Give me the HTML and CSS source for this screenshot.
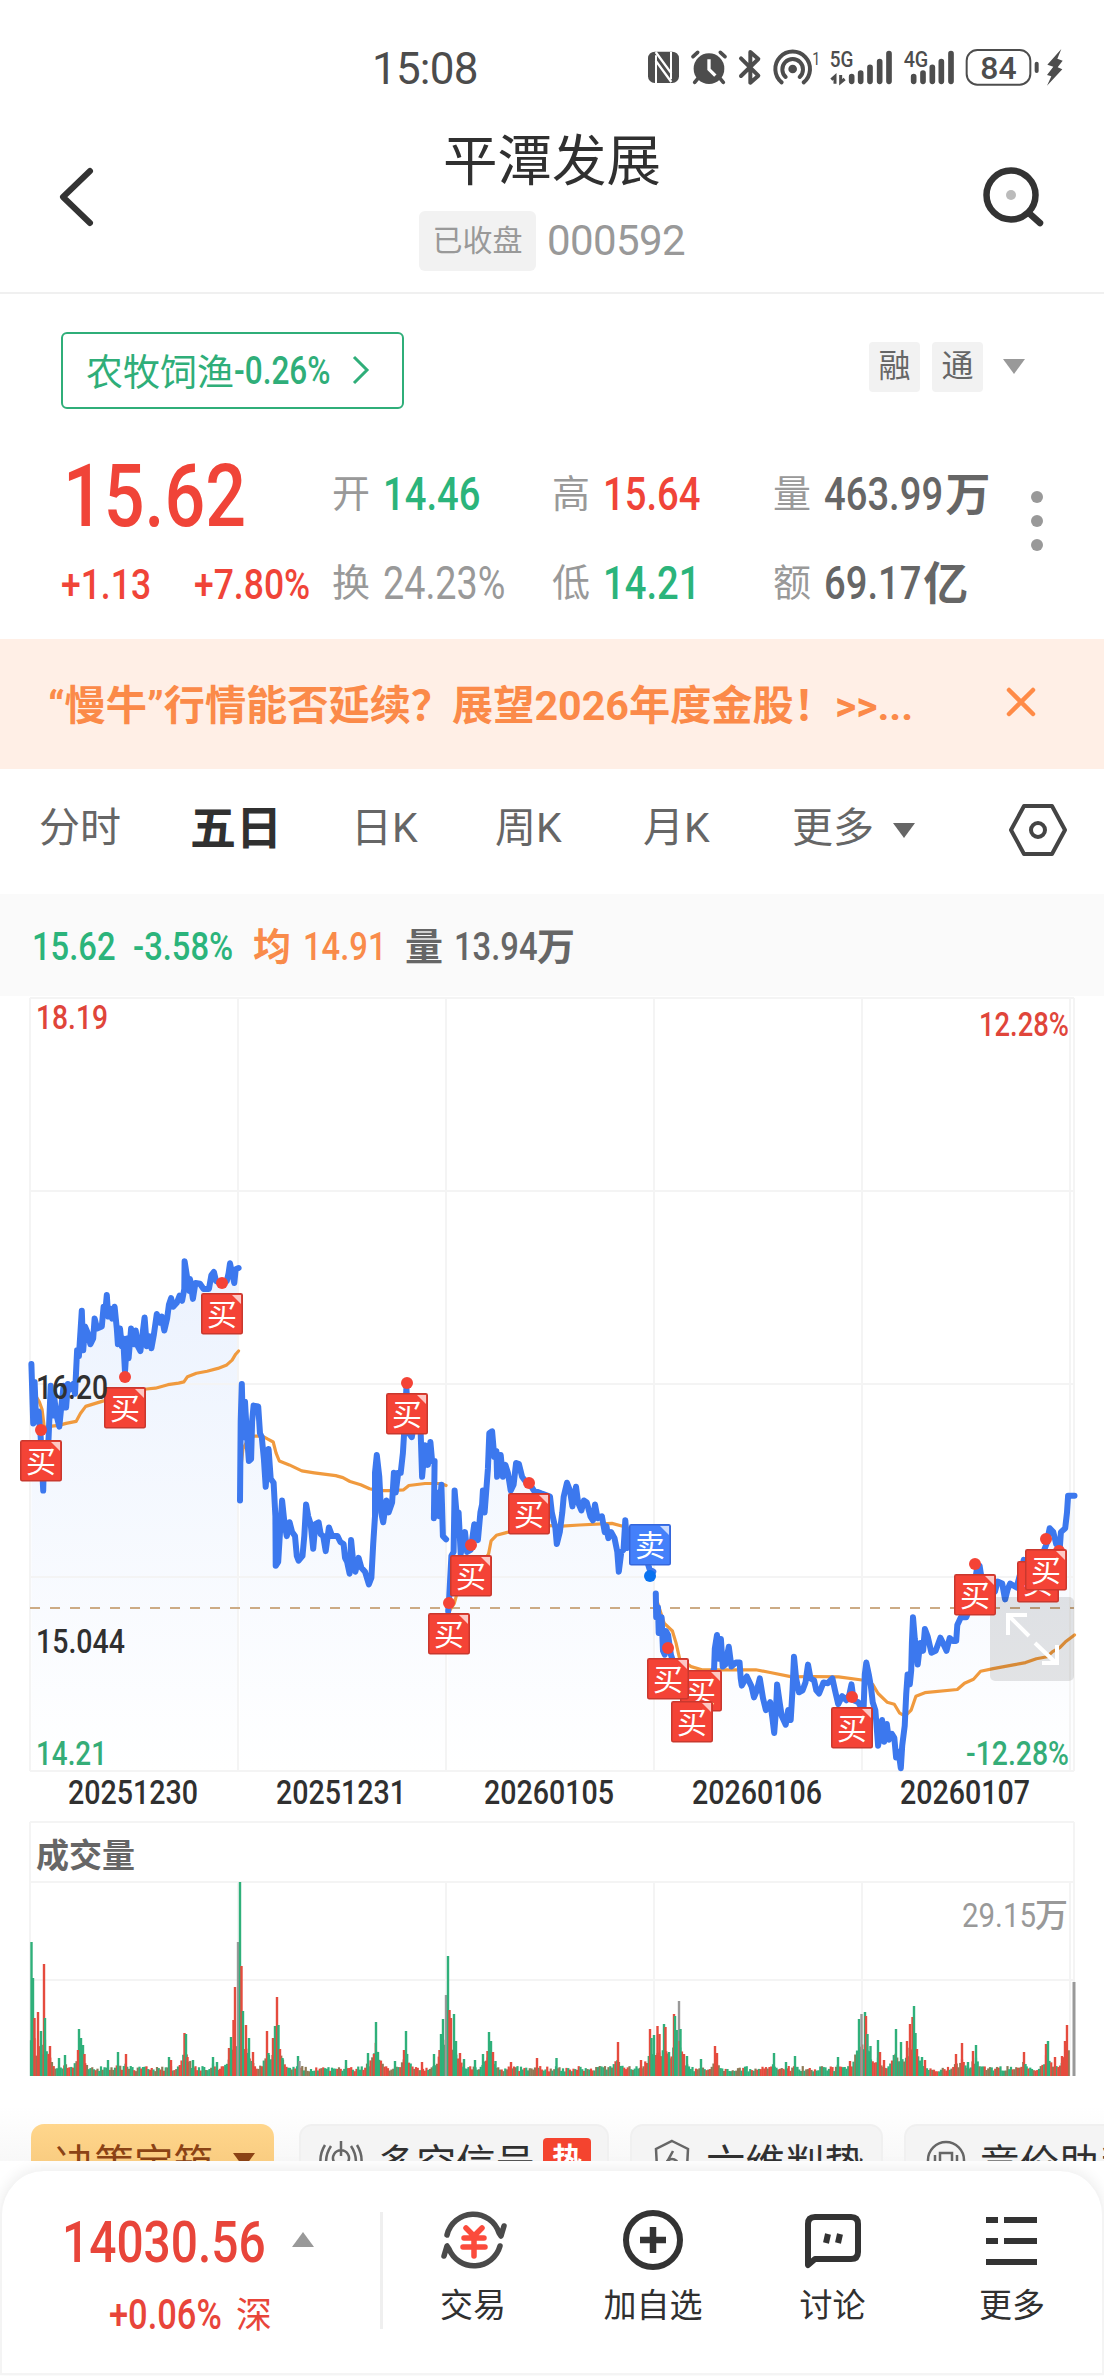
FILE: index.html
```html
<!DOCTYPE html>
<html lang="zh-CN">
<head>
    <meta charset="UTF-8">
    <meta name="viewport" content="width=device-width, initial-scale=1.0">
    <title>平潭发展 000592</title>
    <link rel="stylesheet" href="styles.css">
</head>
<body>
    <div class="status-bar">
        <span class="clock">15:08</span>
        <svg class="status-icons" viewBox="0 0 1452 240" width="484" height="80">
            <g fill="#4d4d4d" stroke="none">
                <!-- NFC -->
                <rect x="84" y="65" width="93" height="94" rx="20"/>
                <path d="M108 76 V159 M153 66 V148" stroke="#fff" stroke-width="6"/>
                <path d="M107 66 L154 130 M107 92 L154 156" fill="none" stroke="#fff" stroke-width="7"/>
                <!-- 闹钟 -->
                <circle cx="267" cy="116" r="46"/>
                <path d="M234 145 L224 157 M300 145 L310 157 M219 80 L233 67 M301 67 L315 80" stroke="#4d4d4d" stroke-width="11" stroke-linecap="round"/>
                <path d="M267 88 V118 L286 137" fill="none" stroke="#fff" stroke-width="10"/>
                <!-- 电量 -->
                <rect x="1040" y="60" width="191" height="104" rx="32" fill="none" stroke="#4d4d4d" stroke-width="6"/>
                <rect x="1244" y="95" width="12" height="34" rx="6"/>
                <path d="M1324 57 L1282 104 L1300 110 L1281 135 L1294 139 L1281 167 L1327 118 L1313 112 L1328 92 L1312 86 Z"/>
            </g>
            <!-- 蓝牙 -->
            <path d="M363 85 L415 137 L391 158 V66 L415 87 L363 138" fill="none" stroke="#4d4d4d" stroke-width="12" stroke-linejoin="round" stroke-linecap="round"/>
            <!-- 热点 -->
            <g fill="none" stroke="#4d4d4d" stroke-width="12" stroke-linecap="round">
                <path d="M485 157 A52 52 0 1 1 551 157"/>
                <path d="M497 141 A31 31 0 1 1 539 141"/>
                <circle cx="518" cy="117" r="7" fill="#4d4d4d"/>
            </g>
            <g fill="#4d4d4d" font-family="Roboto, sans-serif" font-weight="500">
                <text x="577" y="104" font-size="56" font-weight="400" textLength="24" lengthAdjust="spacingAndGlyphs">1</text>
                <text x="629" y="111" font-size="66" textLength="71" lengthAdjust="spacingAndGlyphs">5G</text>
                <text x="851" y="111" font-size="66" textLength="74" lengthAdjust="spacingAndGlyphs">4G</text>
                <text x="1081" y="147" font-size="94" textLength="109" lengthAdjust="spacingAndGlyphs">84</text>
            </g>
            <path d="M645 161 V139 L634 149 M662 135 V157 L674 147" fill="none" stroke="#4d4d4d" stroke-width="9"/>
            <g stroke="#4d4d4d" stroke-width="17" stroke-linecap="round">
                <path d="M695 140 V154 M722 129 V154 M750 112 V154 M779 95 V154 M807 71 V154"/>
                <path d="M881 140 V154 M909 129 V154 M937 112 V154 M964 95 V154 M993 71 V154"/>
            </g>
        </svg>
    </div>

    <header class="nav-bar">
        <svg class="nav-back" viewBox="0 0 44 66" width="44" height="66"><path d="M35 7 L8 33 L35 59" fill="none" stroke="#333" stroke-width="6" stroke-linecap="round" stroke-linejoin="round"/></svg>
        <div class="nav-title">
            <h1>平潭发展</h1>
            <div class="nav-sub"><span class="closed">已收盘</span><span class="code">000592</span></div>
        </div>
        <svg class="nav-search" viewBox="0 0 70 70" width="70" height="70">
            <circle cx="31" cy="33" r="24.5" fill="none" stroke="#333" stroke-width="6.5"/>
            <circle cx="31" cy="33" r="5" fill="#bbb"/>
            <path d="M50 52 L60 61" stroke="#333" stroke-width="6.5" stroke-linecap="round"/>
        </svg>
    </header>

    <section class="quote">
        <div class="quote-top">
            <a class="industry">农牧饲渔<span class="industry-num">-0.26%</span>
                <svg viewBox="0 0 20 32" width="20" height="32"><path d="M3 3 L16 16 L3 29" fill="none" stroke="#2fae79" stroke-width="3"/></svg>
            </a>
            <div class="tags"><span>融</span><span>通</span><i class="tri-down"></i></div>
        </div>
        <div class="quote-body">
            <div class="price-col">
                <div class="price"><b class="din">15.62</b></div>
                <div class="change"><b class="din">+1.13</b><b class="din">+7.80%</b></div>
            </div>
            <div class="stats">
                <div><label>开</label><b class="din green">14.46</b></div>
                <div><label>高</label><b class="din red">15.64</b></div>
                <div><label>量</label><b class="din unit-num">463.99</b><em>万</em></div>
                <div><label>换</label><b class="din muted">24.23%</b></div>
                <div><label>低</label><b class="din green">14.21</b></div>
                <div><label>额</label><b class="din unit-num short">69.17</b><em>亿</em></div>
            </div>
            <div class="dots"><i></i><i></i><i></i></div>
        </div>
    </section>

    <div class="banner">
        <span>“慢牛”行情能否延续？展望2026年度金股！&gt;&gt;...</span>
        <svg viewBox="0 0 30 30" width="30" height="30"><path d="M3 3 L27 27 M27 3 L3 27" stroke="#ff8b47" stroke-width="4.5" stroke-linecap="round"/></svg>
    </div>

    <nav class="tabs">
        <a>分时</a>
        <a class="active">五日</a>
        <a>日K</a>
        <a>周K</a>
        <a>月K</a>
        <a>更多</a>
        <i class="tri-down dark"></i>
        <svg viewBox="0 0 60 54" width="60" height="54">
            <path d="M16 3 H44 L57 27 L44 51 H16 L3 27 Z" fill="none" stroke="#444" stroke-width="4" stroke-linejoin="round"/>
            <circle cx="30" cy="27" r="7" fill="none" stroke="#444" stroke-width="4"/>
        </svg>
    </nav>

    <div class="info-bar">
        <b class="din green">15.62</b>
        <b class="din green">-3.58%</b>
        <em class="orange">均</em>
        <b class="din orange">14.91</b>
        <em>量</em>
        <b class="din">13.94</b>
        <em>万</em>
    </div>

    <svg class="chart" id="chart" viewBox="0 996 1104 1110" width="1104" height="1110">
        <defs>
            <linearGradient id="areaFill" gradientUnits="userSpaceOnUse" x1="0" y1="1250" x2="0" y2="1771">
                <stop offset="0" stop-color="#ebf2fe"/>
                <stop offset="1" stop-color="#ffffff"/>
            </linearGradient>
        </defs>
        <g id="areas"></g>
        <path class="grid" d="M30 998 H1074 M30 1191 H1074 M30 1384 H1074 M30 1577 H1074 M30 1771 H1074 M30 998 V1771 M238 998 V1771 M446 998 V1771 M654 998 V1771 M862 998 V1771 M1070 998 V1771 M1074 998 V1771"/>
        <path class="grid" d="M30 1822 H1074 M30 1882 H1074 M30 1980 H1074 M30 1822 V2076 M1074 1822 V2076 M238 1882 V2076 M446 1882 V2076 M654 1882 V2076 M862 1882 V2076 M1070 1882 V2076"/>
        <path class="base-line" d="M30 1608 H1074"/>
        <g id="avgLines"></g>
        <g id="priceLines"></g>
        <g>
            <rect x="990" y="1597" width="84" height="84" rx="5" fill="#000" fill-opacity=".1"/>
            <path d="M1027 1615 H1008 V1635 M1010 1617 L1029 1636 M1035 1643 L1056 1663 M1057 1645 V1663 H1042" fill="none" stroke="#fff" stroke-width="4"/>
        </g>
        <g id="marks"></g>
        <g class="axis">
            <text x="36" y="1029" textLength="72" lengthAdjust="spacingAndGlyphs" class="t-red">18.19</text>
            <text x="979" y="1036" textLength="90" lengthAdjust="spacingAndGlyphs" class="t-red">12.28%</text>
            <text x="36" y="1399" textLength="72" lengthAdjust="spacingAndGlyphs">16.20</text>
            <text x="36" y="1653" textLength="89" lengthAdjust="spacingAndGlyphs">15.044</text>
            <text x="36" y="1765" textLength="71" lengthAdjust="spacingAndGlyphs" class="t-green">14.21</text>
            <text x="966" y="1765" textLength="103" lengthAdjust="spacingAndGlyphs" class="t-green">-12.28%</text>
            <text x="68" y="1804" textLength="130" lengthAdjust="spacingAndGlyphs">20251230</text>
            <text x="276" y="1804" textLength="130" lengthAdjust="spacingAndGlyphs">20251231</text>
            <text x="484" y="1804" textLength="130" lengthAdjust="spacingAndGlyphs">20260105</text>
            <text x="692" y="1804" textLength="130" lengthAdjust="spacingAndGlyphs">20260106</text>
            <text x="900" y="1804" textLength="130" lengthAdjust="spacingAndGlyphs">20260107</text>
            <text x="962" y="1927" textLength="74" lengthAdjust="spacingAndGlyphs" class="t-gray">29.15</text>
        </g>
        <text class="vol-title" x="36" y="1867">成交量</text>
        <text class="vol-unit" x="1035" y="1927">万</text>
        <g id="volume"></g>
    </svg>

    <div class="tools">
        <span class="chip gold">决策宝箱<i class="tri-down"></i></span>
        <span class="chip c2">
            <svg viewBox="0 0 44 44" width="44" height="44"><g fill="none" stroke="#666" stroke-width="2.5"><path d="M22 3 V18 M15 24 A8 8 0 1 1 29 24 M12 8 Q4 20 9 34 M6 7 Q-2 20 4 34 M32 8 Q40 20 35 34 M38 7 Q46 20 40 34"/></g></svg>
            多空信号<em class="hot">热</em>
        </span>
        <span class="chip c3">
            <svg viewBox="0 0 40 44" width="40" height="44"><g fill="none" stroke="#666" stroke-width="2.5"><path d="M20 3 L36 11 L35 30 L20 42 L5 30 L4 11 Z M21 13 L15 24"/><circle cx="20" cy="27" r="6"/></g></svg>
            六维判势
        </span>
        <span class="chip c4">
            <svg viewBox="0 0 42 44" width="42" height="44"><g fill="none" stroke="#666" stroke-width="2.5"><circle cx="21" cy="22" r="18"/><path d="M15 30 V15 H27 V30 M10 17 V28 M32 17 V28"/></g></svg>
            竞价助手
        </span>
    </div>

    <footer class="bottom-bar">
        <div class="index">
            <div class="index-value"><b class="din">14030.56</b><i class="tri-up"></i></div>
            <div class="index-change"><b class="din">+0.06%</b><span>深</span></div>
        </div>
        <div class="actions">
            <a>
                <svg viewBox="0 0 70 62" width="70" height="62">
                    <g fill="none" stroke="#4a4a4a" stroke-width="5.5" stroke-linecap="round" stroke-linejoin="round">
                        <path d="M9 26 A27 27 0 0 1 61 24 L63 27 L66 17"/>
                        <path d="M62 37 A27 27 0 0 1 11 40 L9 37 L6 47"/>
                    </g>
                    <path d="M28 19 L36 27 L44 19 M36 27 V47 M26 29 H46 M25 38 H47" fill="none" stroke="#fb4b3c" stroke-width="5.5" stroke-linecap="round"/>
                </svg>
                交易
            </a>
            <a>
                <svg viewBox="0 0 62 62" width="62" height="62"><g fill="none" stroke="#333" stroke-width="6"><circle cx="31" cy="31" r="27"/><path d="M31 18 V44 M18 31 H44" stroke-width="6.5"/></g></svg>
                加自选
            </a>
            <a>
                <svg viewBox="0 0 62 62" width="62" height="62"><g fill="none" stroke="#333" stroke-width="6" stroke-linejoin="round"><path d="M6 56 V15 Q6 8 13 8 H49 Q56 8 56 15 V43 Q56 50 49 50 H13 Z"/><path d="M26 25 L24 34 M38 25 L36 34" stroke-width="6"/></g></svg>
                讨论
            </a>
            <a>
                <svg viewBox="0 0 62 62" width="62" height="62"><path d="M5 11 H17 M23 11 H56 M5 32 H17 M23 32 H56 M5 53 H56" stroke="#333" stroke-width="6"/></svg>
                更多
            </a>
        </div>
    </footer>

    <script src="chart.js"></script>
</body>
</html>
```
FILE: styles.css
```css
/* 全局 */
* {
    box-sizing: border-box;
}

body {
    margin: 0;
    width: 1104px;
    height: 2376px;
    overflow: hidden;
    position: relative;
    background: #fff;
    color: #303030;
    font-family: Roboto, "Noto Sans CJK SC", sans-serif;
}

i,
em {
    font-style: normal;
}

/* 窄体数字 */
.din {
    display: inline-block;
    font-family: Roboto, sans-serif;
    font-weight: 500;
    white-space: nowrap;
    transform: scaleX(.855);
    transform-origin: left center;
}

.green {
    color: #2bb47b;
}

.red {
    color: #f04438;
}

.orange {
    color: #f98b4a;
}

.tri-down {
    display: inline-block;
    border: 11px solid transparent;
    border-top: 15px solid #999;
    border-bottom: 0;
}

.tri-up {
    display: inline-block;
    border: 11px solid transparent;
    border-bottom: 15px solid #999;
    border-top: 0;
}

/* 状态栏 */
.status-bar {
    height: 110px;
    padding: 30px 0 0 372px;
    display: flex;
    justify-content: space-between;
    color: #4c4c4c;
}

.clock {
    font-size: 44px;
    line-height: 79px;
    letter-spacing: -.8px;
}

/* 标题 */
.nav-bar {
    height: 184px;
    display: grid;
    grid-template-columns: 200px 1fr 200px;
    border-bottom: 2px solid #f0f0f0;
}

.nav-back {
    margin: 54px 0 0 55px;
}

.nav-search {
    margin: 52px 0 0 76px;
}

.nav-title {
    text-align: center;
}

.nav-title h1 {
    margin: 18px 0 0;
    font-size: 54.5px;
    line-height: 66px;
    font-weight: 400;
}

.nav-sub {
    margin-top: 16px;
    display: flex;
    justify-content: center;
    align-items: center;
    color: #999;
}

.closed {
    width: 117px;
    height: 60px;
    margin-right: 11px;
    border-radius: 6px;
    background: #f2f2f2;
    font-size: 30px;
    line-height: 59px;
}

.code {
    font-size: 42px;
    line-height: 62px;
    letter-spacing: -.6px;
}

/* 行情 */
.quote {
    height: 344px;
    padding: 38px 61px 0;
}

.quote-top {
    display: flex;
    justify-content: space-between;
}

.industry {
    width: 343px;
    height: 77px;
    padding: 0 31px 2px 23px;
    display: flex;
    align-items: center;
    border: 2px solid #2fae79;
    border-radius: 6px;
    color: #2fae79;
    font-size: 37px;
}

.industry-num {
    margin-top: 3px;
    font-weight: 500;
    font-size: 38px;
    transform: scaleX(.83);
    transform-origin: left center;
}

.industry svg {
    margin-left: auto;
}

.tags {
    display: flex;
    align-items: center;
    height: 69px;
    margin-right: 18px;
}

.tags span {
    width: 51px;
    height: 50px;
    margin-right: 12px;
    border-radius: 4px;
    background: #f2f2f2;
    color: #666;
    font-size: 32px;
    line-height: 49px;
    text-align: center;
}

.tags .tri-down {
    margin-left: 8px;
}

.quote-body {
    display: flex;
    margin-top: 41px;
}

.price-col {
    width: 272px;
    flex: none;
    color: #f04438;
}

.price {
    height: 90px;
    padding-left: 2px;
    font-size: 87px;
    line-height: 93px;
}

.price .din {
    transform: scaleX(.825);
}

.change {
    display: grid;
    grid-template-columns: 133px 1fr;
    font-size: 43px;
    line-height: 88px;
}

.change .din {
    transform: scaleX(.825);
}

.stats {
    flex: none;
    width: 680px;
    display: grid;
    grid-template-columns: 220px 221px 1fr;
    grid-template-rows: 88px 90px;
    font-size: 46px;
}

.stats > div {
    display: flex;
    align-items: center;
    color: #666;
}

.stats label {
    width: 51px;
    margin: -7px 0 0 -1px;
    font-size: 38px;
    color: #999;
}

.stats .din {
    transform: scaleX(.83);
}

.stats .muted {
    font-weight: 400;
    transform: scaleX(.82);
    color: #999;
}

.stats em {
    margin-top: -5px;
    font-weight: 700;
    font-size: 45px;
}

.unit-num {
    margin-right: -22px;
}

.unit-num.short {
    margin-right: -18px;
}

.dots {
    display: flex;
    flex-direction: column;
    gap: 12px;
    margin: 41px 0 0 18px;
}

.dots i {
    width: 12px;
    height: 12px;
    border-radius: 50%;
    background: #999;
}

/* 公告 */
.banner {
    height: 130px;
    margin-top: 1px;
    padding: 0 68px 4px 48px;
    display: flex;
    align-items: center;
    justify-content: space-between;
    background: #ffefe6;
    color: #fb8a49;
    font-size: 41.2px;
    font-weight: 700;
    white-space: nowrap;
}

/* 周期 */
.tabs {
    height: 125px;
    display: flex;
    align-items: center;
    padding: 0 0 3px 39px;
    font-size: 41px;
    line-height: 50px;
    color: #666;
}

.tabs a {
    width: 144px;
    margin-top: -5px;
    white-space: nowrap;
}

.tabs a:nth-child(1) {
    width: 151px;
}

.tabs a.active {
    width: 161px;
    font-size: 46px;
    font-weight: 700;
    color: #303030;
}

.tabs a:nth-child(4) {
    width: 148px;
}

.tabs a:nth-child(5) {
    width: 149px;
}

.tabs a:nth-child(6) {
    width: 101px;
}

.tri-down.dark {
    border-top-color: #666;
}

.tabs svg {
    margin-left: 93px;
}

.info-bar {
    height: 102px;
    display: grid;
    grid-template-columns: 101px 120px 50px 102px 49px 83px 50px;
    align-items: center;
    padding-left: 32px;
    background: #fafafa;
    color: #666;
    font-size: 39px;
}

.info-bar .din {
    margin-top: 4px;
    transform: scaleX(.84);
}

.info-bar em {
    margin-top: -3px;
    font-weight: 700;
    font-size: 38px;
}

/* 图表 */
.chart {
    display: block;
}

.grid {
    fill: none;
    stroke: #f4f4f4;
    stroke-width: 2;
}

.base-line {
    stroke: #ccab85;
    stroke-width: 2;
    stroke-dasharray: 10 10;
}

.price-line {
    fill: none;
    stroke: #3c78ee;
    stroke-width: 6;
    stroke-linejoin: round;
    stroke-linecap: round;
}

.avg-line {
    fill: none;
    stroke: #f09a3e;
    stroke-width: 3.2;
    stroke-linejoin: round;
    stroke-linecap: round;
}

.axis text {
    font-family: Roboto, sans-serif;
    font-size: 33.5px;
    font-weight: 500;
    fill: #303030;
}

.axis .t-red {
    fill: #e0453a;
}

.axis .t-green {
    fill: #35ad78;
}

.axis .t-gray {
    font-weight: 400;
    fill: #999;
}

.vol-title {
    font-size: 33px;
    font-weight: 700;
    fill: #666;
}

.vol-unit {
    font-size: 33px;
    font-weight: 500;
    fill: #999;
}

.mark-text {
    font-size: 30px;
    fill: #fff;
    text-anchor: middle;
}

/* 功能入口 */
.tools {
    height: 55px;
    padding: 18px 0 0 31px;
    display: flex;
    overflow: hidden;
    background: linear-gradient(#fff, #f8f8f8);
}

.chip {
    flex: none;
    height: 72px;
    display: flex;
    align-items: center;
    border: 2px solid #f0f0f0;
    border-radius: 13px;
    background: #f4f4f4;
    font-size: 39.5px;
    white-space: nowrap;
}

.chip.gold {
    width: 243px;
    padding-left: 24px;
    border: 0;
    background: linear-gradient(#ffd68c, #f4c477);
    color: #8b4315;
}

.gold .tri-down {
    margin-left: 20px;
    border-top-color: #8b4315;
}

.c2 {
    width: 310px;
    margin-left: 25px;
    padding-left: 18px;
}

.c2 svg {
    margin-right: 14px;
}

.hot {
    width: 48px;
    height: 44px;
    margin-left: 8px;
    border-radius: 4px;
    background: #f4442f;
    color: #fff;
    font-size: 30px;
    font-weight: 700;
    line-height: 42px;
    text-align: center;
}

.c3 {
    width: 253px;
    margin-left: 21px;
    padding-left: 20px;
}

.c3 svg {
    margin-right: 14px;
}

.c4 {
    width: 300px;
    margin-left: 21px;
    padding-left: 19px;
}

.c4 svg {
    margin-right: 13px;
}

/* 底部栏 */
.bottom-bar {
    height: 204px;
    margin-top: 10px;
    display: flex;
    border: 2px solid #f4f4f4;
    border-top: 0;
    border-radius: 44px 44px 0 0;
    background: #fff;
    box-shadow: 0 -3px 14px rgba(0, 0, 0, .07);
}

.index {
    position: relative;
    width: 384px;
    height: 117px;
    margin-top: 41px;
    padding-left: 60px;
    border-right: 3px solid #efefef;
    color: #e8453a;
}

.index-value {
    height: 60px;
    display: flex;
    align-items: center;
    font-size: 58px;
}

.index-value .din {
    width: 230px;
    transform: scaleX(.825);
}

.index-value .tri-up {
    margin-top: -5px;
}

.index-change {
    margin-top: 14px;
    padding-left: 47px;
    display: flex;
    align-items: center;
    height: 56px;
    font-size: 42px;
}

.index-change .din {
    width: 127px;
    transform: scaleX(.82);
}

.index-change span {
    margin-top: -5px;
    font-size: 36px;
}

.actions {
    flex: 1;
    display: grid;
    grid-template-columns: 180px 180px 179px 180px;
    padding-top: 38px;
}

.actions a {
    display: flex;
    flex-direction: column;
    align-items: center;
    font-size: 33px;
    line-height: 46px;
}

.actions svg {
    margin-bottom: 12px;
}
```
FILE: chart.js
```js
const NS = 'http://www.w3.org/2000/svg';

// 每段: ox 水平偏移, k 水平缩放, p 价格点, a 均价点
const days = [
    [{ ox: 0, k: 2.8,
        p: '88,415 93,565 97,460 101,560 108,535 114,600 121,735 124,620 130,690 136,600 142,470 147,545 151,490 157,540 166,573 172,520 178,470 185,525 190,465 195,480 205,465 210,490 216,380 221,395 229,280 233,380 238,320 245,335 253,365 261,350 265,300 272,325 285,320 290,270 294,290 299,240 303,295 309,275 314,300 321,270 327,325 330,365 336,325 341,370 345,350 350,435 356,350 360,400 367,325 375,365 380,330 386,370 393,382 399,340 405,297 411,370 419,345 424,375 431,340 439,288 447,310 453,295 460,330 468,300 473,265 479,248 485,270 495,260 503,242 510,255 516,225 517,155 524,195 530,230 532,200 540,250 547,210 560,212 570,225 585,225 592,190 599,182 605,205 621,210 635,205 640,185 644,160 650,185 656,210 660,175 668,172',
        a: '88,440 97,490 110,510 118,530 124,575 145,572 165,570 185,565 213,560 225,540 240,522 265,515 290,508 350,490 410,478 435,476 470,467 500,463 515,460 525,447 550,438 580,433 610,426 635,417 650,405 660,390 668,382' }],
    [{ ox: 0, k: 2.8,
        p: '672,760 674,560 677,465 681,600 686,510 691,590 697,660 703,655 706,560 710,520 723,522 728,590 733,600 739,655 744,725 752,630 758,705 766,715 771,800 772,925 779,915 784,840 790,760 797,820 803,850 811,815 818,840 826,850 831,900 836,912 847,900 852,850 857,770 863,800 870,820 877,882 883,820 892,815 898,845 905,850 912,888 921,828 930,850 945,850 953,865 962,870 966,905 972,915 979,945 983,860 989,915 995,940 1004,905 1012,930 1022,940 1033,972 1040,955 1045,870 1050,800 1050,690 1055,645 1062,700 1067,790 1073,815 1082,760 1088,790 1098,765 1103,690 1108,740 1115,690 1122,690 1128,640 1133,570 1138,475 1145,590 1153,600 1160,560 1178,590 1182,700 1190,620 1198,670 1205,612 1210,660 1217,660 1215,805 1225,740 1230,800 1236,720 1240,850 1249,858',
        a: '674,680 680,630 695,605 712,597 735,597 750,605 765,612 773,640 782,660 810,670 845,685 880,690 940,697 960,702 980,712 1010,720 1035,730 1060,735 1090,735 1130,733 1145,722 1190,717 1235,717 1249,722' }],
    [{ ox: 0, k: 2.8,
        p: '1255,1040 1258,1000 1264,900 1270,890 1273,735 1279,800 1284,790 1290,895 1302,840 1308,890 1318,885 1328,820 1338,860 1345,790 1350,770 1352,735 1357,790 1362,730 1366,680 1370,590 1378,585 1384,650 1390,635 1392,700 1402,645 1408,700 1415,670 1422,690 1430,735 1438,720 1445,665 1453,668 1462,700 1470,710 1481,715 1495,735 1515,742 1540,750 1545,790 1555,830 1559,870',
        a: '1258,1040 1272,1020 1290,960 1340,930 1368,895 1375,862 1390,848 1415,842 1440,836 1520,825 1559,823' },
    { ox: 540, k: 2.78,
        p: '55,840 62,790 66,750 75,715 83,735 90,775 100,725 106,765 115,785 122,760 130,765 140,800 147,810 153,770 160,805 172,800 180,840 185,825 190,855 198,840 207,855 215,890 219,940 226,890 232,885 237,810 243,880 250,850 265,880 280,915 295,905 305,935 315,940',
        a: '60,825 110,822 200,818 230,825 260,835 315,850' }],
    [{ ox: 540, k: 2.78,
        p: '322,995 323,1055 328,1030 330,1095 338,1055 342,1140 347,1150 350,1090 356,1100 364,1150 375,1180 390,1215 400,1200 415,1250 440,1260 460,1240 478,1200 484,1185 486,1135 492,1100 497,1160 503,1110 508,1180 515,1175 525,1130 532,1180 545,1170 555,1170 558,1210 561,1228 575,1205 588,1230 595,1258 603,1240 611,1210 620,1260 628,1290 640,1270 646,1310 651,1348 656,1290 659,1225 666,1270 672,1305 683,1327 690,1290 697,1315 702,1240 706,1155 712,1210 720,1245 730,1240 738,1220 745,1175 752,1210 762,1215 768,1240 776,1248 788,1220 800,1222 813,1210 820,1240 829,1275 840,1255 852,1265 860,1250 866,1225 872,1265 885,1270 897,1290',
        a: '324,1010 345,1070 368,1090 378,1120 388,1160 420,1180 450,1188 600,1188 640,1195 700,1206 760,1205 830,1206 895,1214' }],
    [{ ox: 540, k: 2.78,
        p: '900,1280 903,1200 907,1170 914,1200 920,1230 925,1270 932,1290 935,1320 940,1380 948,1335 951,1315 957,1370 964,1325 970,1365 978,1350 985,1360 990,1410 997,1395 1003,1437 1007,1380 1014,1330 1018,1250 1022,1200 1028,1225 1032,1190 1034,1120 1037,1055 1042,1110 1050,1175 1057,1120 1065,1140 1070,1085 1078,1105 1088,1145 1100,1140 1113,1107 1120,1120 1130,1140 1139,1108 1148,1115 1157,1115 1160,1075 1170,1055 1185,1055 1200,1020 1215,930 1222,925 1230,970 1265,990 1272,965 1285,970 1293,1010 1300,985 1307,970 1325,980 1345,910 1375,960 1395,900 1408,870 1417,830 1427,840 1435,870 1445,880 1448,840 1460,830 1465,790 1468,748 1486,748',
        a: '900,1216 925,1225 940,1248 965,1270 985,1275 1000,1298 1015,1305 1032,1290 1045,1255 1070,1246 1160,1238 1180,1222 1205,1212 1225,1192 1260,1185 1320,1175 1350,1170 1380,1160 1410,1155 1425,1142 1445,1132 1460,1118 1486,1100' }]
];

// 买卖点: [框x, 框y, 圆点x, 圆点y, 文字]
const marks = [
    [20, 1440, 41, 1430, '买'], [104, 1387, 125, 1377, '买'], [201, 1293, 222, 1283, '买'],
    [386, 1393, 407, 1383, '买'], [450, 1555, 471, 1545, '买'], [428, 1613, 449, 1603, '买'],
    [508, 1493, 529, 1483, '买'], [629, 1524, 650, 1576, '卖'],
    [680, 1670, 701, 1690, '买'], [647, 1658, 668, 1648, '买'], [671, 1701, 692, 1720, '买'],
    [831, 1707, 852, 1697, '买'], [954, 1574, 975, 1564, '买'],
    [1017, 1561, 1059, 1551, '买'], [1025, 1549, 1046, 1539, '买']
];

// 成交量峰值: x 高度 颜色(g/r/k)
const peaks = ('31.5 134 g,33 98 g,34.5 58 r,38 64 r,44 112 r,45 58 g,41 45 g,50 30 r,65 21 g,59 18 g,79 47 g,81 38 g,83 31 g,78 26 r,84.5 22 r,' +
    '108 16 g,118 24 g,126 22 r,169 19 g,171 16 r,184.5 43 r,186 42 g,187.5 19 r,193 16 g,213 19 g,217 14 g,229 28 r,231 39 g,233.5 56 r,235 89 r,' +
    '238 134 k,240 194 g,241.5 110 r,243 65 g,246 51 r,249 38 g,253 24 r,267 45 r,268.5 23 g,273 38 r,275 50 g,277 79 r,278.5 51 g,280 27 r,282.5 18 g,' +
    '298 20 g,299.5 15 k,346 16 g,368 23 g,374 22 r,376 54 g,378 24 g,395 15 g,404 26 r,406 45 g,422 14 r,434 22 g,439.5 26 r,441 42 g,443 57 g,' +
    '446 81 k,448 120 g,449.5 66 r,451 58 r,454 62 g,456 35 g,460 23 r,464 17 g,475 16 g,483 22 g,487.5 25 r,489 44 g,491 35 g,493 24 r,495.5 15 g,' +
    '511 14 r,537 18 r,556.5 18 g,618 34 r,641 16 r,650 47 r,651.5 38 g,654 41 g,657.5 50 r,659.5 42 r,664 52 g,665.5 49 r,669 24 g,674 62 r,675 60 g,' +
    '677 46 g,679 75 k,679.7 35 r,680.5 47 g,684 22 r,687 20 g,701 17 g,715 30 r,717 23 r,774 23 g,786 14 g,795 20 g,838 19 g,850 15 r,859 57 g,' +
    '861.5 62 k,865 64 g,866 60 r,867.5 42 g,870.5 30 g,878 36 g,880 24 r,884 16 r,896 47 g,901 34 g,907 35 r,910 52 r,912.5 59 r,914 70 g,915.5 43 g,' +
    '917 27 r,922 19 g,925 16 r,956 22 r,962 33 r,968 14 g,973 25 r,976 31 g,1024 24 r,1025.5 12 g,1046 32 r,1048 35 g,1055 19 r,1062 20 r,1065 35 r,1067 51 r')
    .split(',').map(s => s.split(' ')).map(v => ({ x: +v[0], h: +v[1], c: v[2] }));
const colors = { g: '#2fb07a', r: '#e54b3e', k: '#999999' };

function add(parent, name, attrs, text) {
    const el = document.createElementNS(NS, name);
    for (const key in attrs) el.setAttribute(key, attrs[key]);
    if (text) el.textContent = text;
    document.getElementById(parent).appendChild(el);
}

function points(parts, key) {
    return parts.flatMap(part => part[key].split(' ').map(s => {
        const [x, y] = s.split(',').map(Number);
        return [(part.ox + x / part.k).toFixed(1), (1200 + y / 2.529).toFixed(1)];
    }));
}

days.forEach(parts => {
    const p = points(parts, 'p');
    const line = p.map(v => v.join(',')).join(' ');
    const avg = points(parts, 'a').map(v => v.join(',')).join(' ');
    add('areas', 'polygon', { points: `${p[0][0]},1771 ${line} ${p[p.length - 1][0]},1771`, fill: 'url(#areaFill)' });
    add('avgLines', 'polyline', { points: avg, class: 'avg-line' });
    add('priceLines', 'polyline', { points: line, class: 'price-line' });
});

marks.forEach(([x, y, cx, cy, text]) => {
    const sell = text === '卖';
    add('marks', 'circle', { cx, cy, r: 6, fill: sell ? '#0a73f0' : '#f44336' });
    add('marks', 'rect', { x: x + .75, y: y + .75, width: 40.5, height: 40, rx: 1.5, fill: sell ? '#4480fa' : '#f44336', stroke: sell ? '#3567dc' : '#c9382e', 'stroke-width': 1.5 });
    add('marks', 'path', { d: `M${x + 31} ${y + 2} H${x + 40} V${y + 11} Z`, fill: sell ? '#c9dafe' : '#fdc8c4' });
    add('marks', 'text', { x: x + 21, y: y + 32, class: 'mark-text' }, text);
});

let seed = 7;
function rand() {
    seed = (seed * 16807) % 2147483647;
    return seed / 2147483647;
}

for (let x = 31; x < 1070; x += 1.75) {
    let h = 4.5 + rand() * 5.5;
    peaks.forEach(p => {
        h = Math.max(h, Math.min(p.h, 60) * .6 * Math.exp(-Math.abs(p.x - x) / 7) * (.7 + rand() * .4));
    });
    const n = rand();
    add('volume', 'rect', { x: x - 1.1, y: 2076 - h, width: 2.2, height: h, fill: n < .42 ? colors.g : n < .74 ? colors.r : '#8d7a56' });
}
peaks.forEach(p => add('volume', 'rect', { x: p.x - 1.2, y: 2076 - p.h, width: 2.4, height: p.h, fill: colors[p.c] }));
add('volume', 'rect', { x: 1072.5, y: 1982, width: 3, height: 94, fill: colors.k });
```
